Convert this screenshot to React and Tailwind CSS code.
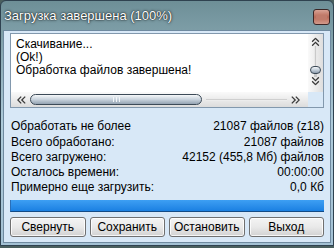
import React from 'react';

// двойная стрелка для полос прокрутки
const Chevrons = ({ className = '' }) => (
  <svg width="9" height="8" viewBox="0 0 9 8" className={className}>
    <path d="M4.2 0.6 L0.8 4 L4.2 7.4 M8.2 0.6 L4.8 4 L8.2 7.4" fill="none" stroke="#3a3a3a" strokeWidth="1.3" />
  </svg>
);

const Row = ({ h, left, right }) => (
  <div className={`flex items-center justify-between ${h}`}>
    <span>{left}</span>
    <span>{right}</span>
  </div>
);

const Btn = ({ children }) => (
  <button className="flex-1 h-[20px] rounded-[3px] border border-[#707070] bg-gradient-to-b from-[#f4f4f4] via-[#e9e9e9] to-[#d2d2d2] text-[12px] text-black leading-none shadow-[inset_0_0_0_1px_rgba(255,255,255,0.8)]">
    {children}
  </button>
);

export default function App() {
  return (
    <div className="w-[334px] h-[248px] overflow-hidden bg-[#4a5f5e] font-['Liberation_Sans',Arial,sans-serif]">
      <div className="h-[246px] flex flex-col border border-[#2f4250] rounded-t-[6px] bg-gradient-to-b from-[#6e8f97] via-[#aecbda] to-[#a3c1d4]">
        {/* заголовок */}
        <div className="h-[29px] flex items-center justify-between pl-[3px] pr-[3px]">
          <span className="text-white text-[13px] [text-shadow:0_0_3px_rgba(0,0,0,0.85),0_0_1px_rgba(0,0,0,0.9)]">
            Загрузка завершена (100%)
          </span>
          <div className="w-[17px] h-[16px] mt-[2px] rounded-[3px] border border-[#3a2626] bg-gradient-to-b from-[#d9a396] via-[#b86a58] to-[#d29a8b] flex items-center justify-center">
            <div className="w-[11px] h-[4px] bg-[#c07b6b] rounded-[1px]" />
          </div>
        </div>

        {/* клиентская область */}
        <div className="flex-1 mx-[2px] mb-[2px] border border-[#6f8aa0] bg-[#d8e8f7] px-[6px] pt-[2px] text-[12px] text-black">
          {/* лог */}
          <div className="h-[75px] border border-[#8298ad] bg-white flex flex-col">
            <div className="flex h-[58px]">
              <div className="flex-1 pl-[5px] pt-[4px] leading-[13px]">
                <div>Скачивание...</div>
                <div>(Ok!)</div>
                <div>Обработка файлов завершена!</div>
              </div>
              <div className="w-[15px] flex flex-col items-center pt-[4px] pb-[7px] bg-gradient-to-r from-[#fafafa] to-[#dedede]">
                <Chevrons className="rotate-90" />
                <div className="h-[20px] w-[3px] bg-[#c9c9c9] border-x border-[#e8e8e8]" />
                <div className="h-[8px] w-[11px] rounded-full border border-[#3c4a57] bg-gradient-to-b from-[#f4f7fa] via-[#c3cfda] to-[#8f9eae]" />
                <div className="h-[3px] w-[3px] bg-[#c9c9c9]" />
                <Chevrons className="-rotate-90" />
              </div>
            </div>
            <div className="flex h-[15px]">
              <div className="flex-1 flex items-center pl-[6px] pr-[8px] gap-[4px] bg-gradient-to-b from-[#fafafa] to-[#dcdcdc]">
                <Chevrons />
                <div className="w-[172px] h-[11px] rounded-full border border-[#3c4a57] bg-gradient-to-b from-[#f6f8fa] via-[#c8d2dc] to-[#94a3b2] flex items-center justify-center">
                  <div className="w-[7px] h-[5px] border-x border-[#f2f5f8] flex justify-center">
                    <div className="w-[1px] h-full bg-[#f2f5f8]" />
                  </div>
                </div>
                <div className="flex-1 h-[3px] bg-[#cfcfcf] border-y border-[#ececec]" />
                <Chevrons className="rotate-180" />
              </div>
              <div className="w-[15px] bg-[#d8e8f7]" />
            </div>
          </div>

          {/* статистика */}
          <div className="mt-[9px] pl-[1px] leading-[14px]">
            <Row h="h-[17px]" left="Обработать не более" right="21087 файлов (z18)" />
            <Row h="h-[16px]" left="Всего обработано:" right="21087 файлов" />
            <Row h="h-[14px]" left="Всего загружено:" right="42152 (455,8 Мб) файлов" />
            <Row h="h-[16px]" left="Осталось времени:" right="00:00:00" />
            <Row h="h-[14px]" left="Примерно еще загрузить:" right="0,0 Кб" />
          </div>

          {/* прогресс */}
          <div className="mt-[6px] h-[12px] bg-gradient-to-b from-[#3d9ff3] to-[#1a80e2] border-b border-[#134b86] border-l border-l-[#2a6fb8]" />

          {/* кнопки */}
          <div className="mt-[5px] flex gap-[4px]">
            <Btn>Свернуть</Btn>
            <Btn>Сохранить</Btn>
            <Btn>Остановить</Btn>
            <Btn>Выход</Btn>
          </div>
        </div>
      </div>
    </div>
  );
}
